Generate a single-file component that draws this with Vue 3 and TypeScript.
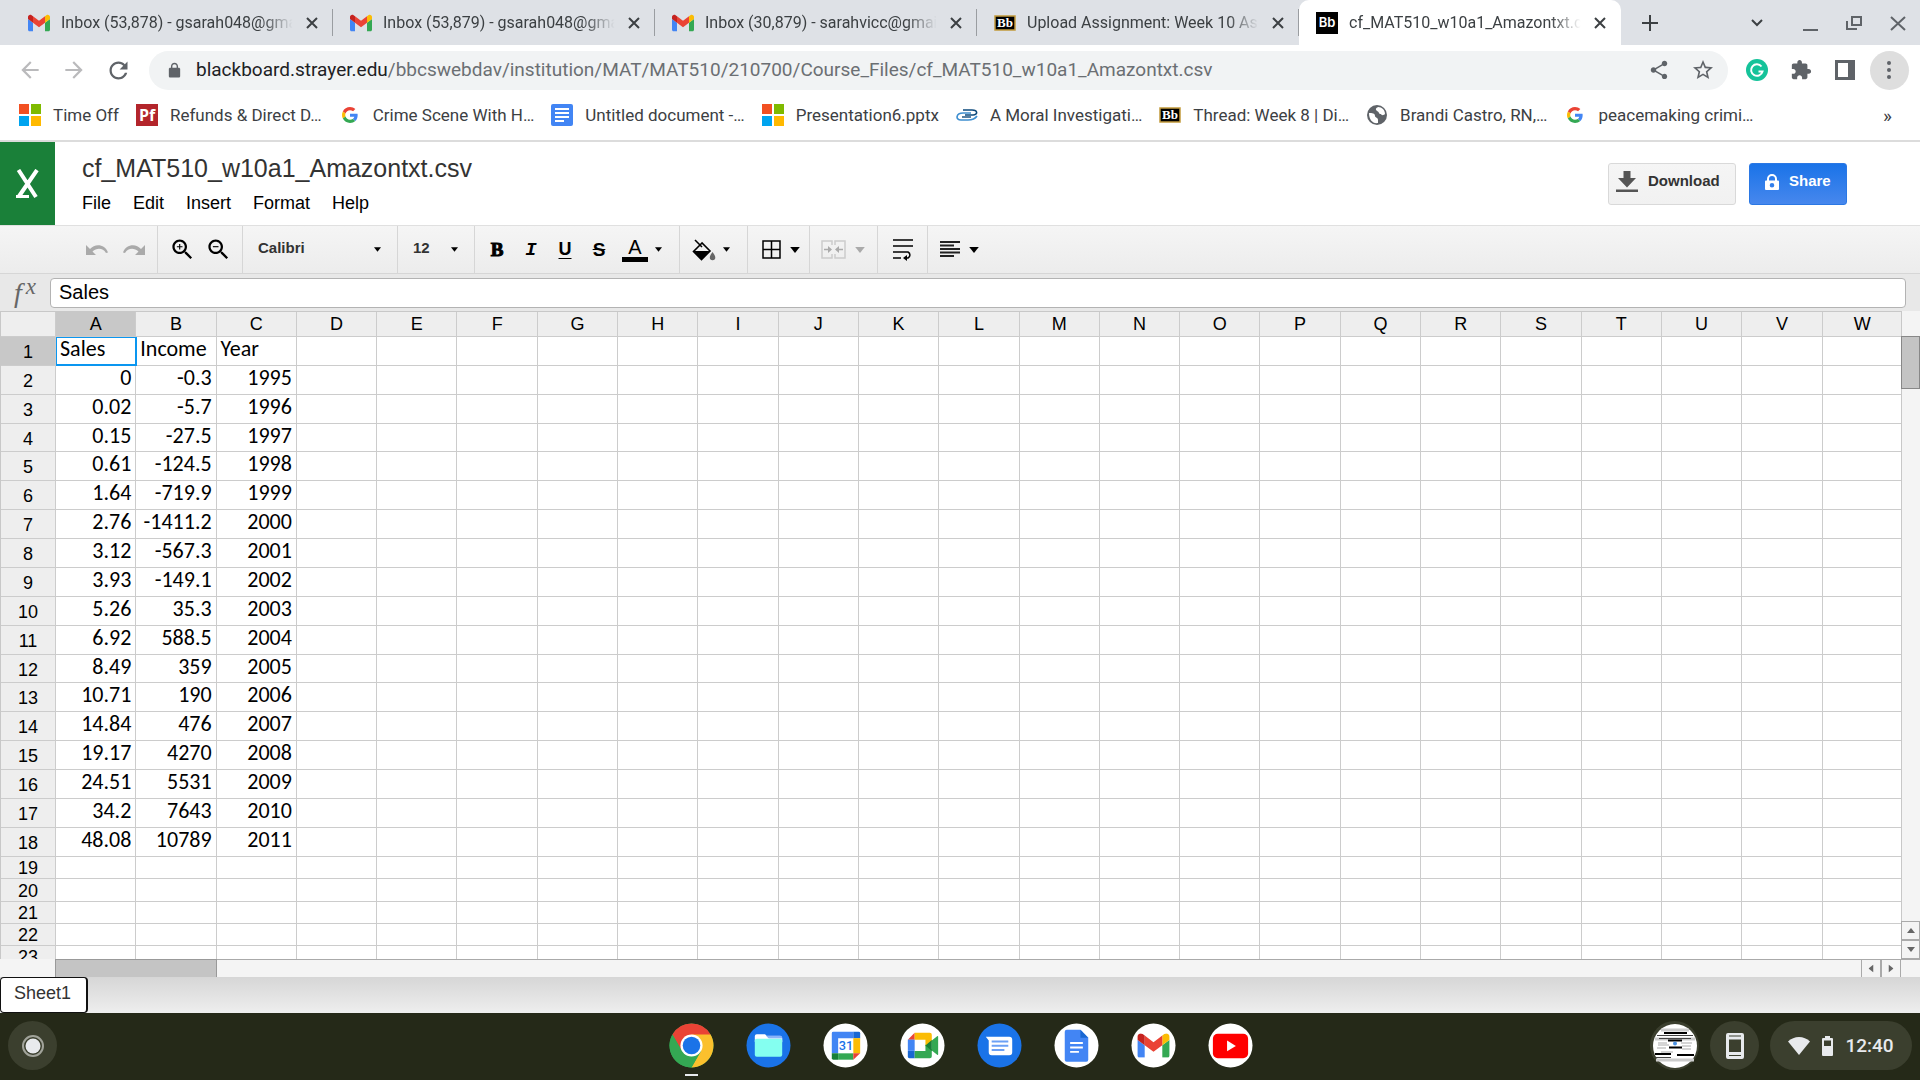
<script setup lang="ts">
import { ref } from 'vue'

interface Tab {
  icon: string
  title: string
  active?: boolean
}

interface Bookmark {
  icon: string
  label: string
}

const tabs: Tab[] = [
  { icon: 'gmail', title: 'Inbox (53,878) - gsarah048@gmail.com' },
  { icon: 'gmail', title: 'Inbox (53,879) - gsarah048@gmail.com' },
  { icon: 'gmail', title: 'Inbox (30,879) - sarahvicc@gmail.com' },
  { icon: 'bb-gold', title: 'Upload Assignment: Week 10 Assignment' },
  { icon: 'bb', title: 'cf_MAT510_w10a1_Amazontxt.csv', active: true },
]

const bookmarks: Bookmark[] = [
  { icon: 'microsoft', label: 'Time Off' },
  { icon: 'pf', label: 'Refunds & Direct D…' },
  { icon: 'google', label: 'Crime Scene With H…' },
  { icon: 'doc', label: 'Untitled document -…' },
  { icon: 'microsoft', label: 'Presentation6.pptx' },
  { icon: 'swirl', label: 'A Moral Investigati…' },
  { icon: 'bb-gold', label: 'Thread: Week 8 | Di…' },
  { icon: 'globe', label: 'Brandi Castro, RN,…' },
  { icon: 'google', label: 'peacemaking crimi…' },
]

const menus = ['File', 'Edit', 'Insert', 'Format', 'Help']
const columns = 'ABCDEFGHIJKLMNOPQRSTUVW'.split('')
const apps = ['chrome', 'files', 'calendar', 'meet', 'messages', 'docs', 'mail', 'youtube']

const data: string[][] = [
  ['Sales', 'Income', 'Year'],
  ['0', '-0.3', '1995'],
  ['0.02', '-5.7', '1996'],
  ['0.15', '-27.5', '1997'],
  ['0.61', '-124.5', '1998'],
  ['1.64', '-719.9', '1999'],
  ['2.76', '-1411.2', '2000'],
  ['3.12', '-567.3', '2001'],
  ['3.93', '-149.1', '2002'],
  ['5.26', '35.3', '2003'],
  ['6.92', '588.5', '2004'],
  ['8.49', '359', '2005'],
  ['10.71', '190', '2006'],
  ['14.84', '476', '2007'],
  ['19.17', '4270', '2008'],
  ['24.51', '5531', '2009'],
  ['34.2', '7643', '2010'],
  ['48.08', '10789', '2011'],
]

const rowCount = 23
const formula = ref('Sales')

function rowClass(n: number): string {
  if (n > data.length) return n === 20 ? 'empty tall' : 'empty'
  return n % 8 === 4 ? 'filled short' : 'filled'
}

function cell(row: number, col: number): string {
  return data[row - 1]?.[col] ?? ''
}
</script>

<template>
  <svg class="sprite" aria-hidden="true">
    <symbol id="gmail" viewBox="52 42 88 66">
      <path fill="#4285f4" d="M58 108h14V74L52 59v43c0 3.32 2.69 6 6 6" />
      <path fill="#34a853" d="M120 108h14c3.32 0 6-2.69 6-6V59l-20 15" />
      <path fill="#fbbc04" d="M120 48v26l20-15v-8c0-7.42-8.47-11.65-14.4-7.2" />
      <path fill="#ea4335" d="M72 74V48l24 18 24-18v26L96 92" />
      <path fill="#c5221f" d="M52 51v8l20 15V48l-5.6-4.2c-5.94-4.45-14.4-.22-14.4 7.2" />
    </symbol>
    <symbol id="bb-gold" viewBox="0 0 22 22">
      <rect x="1" y="4" width="20" height="14" fill="#000" stroke="#c29a3c" stroke-width="1.5" />
      <text x="11" y="15" text-anchor="middle" font-family="Liberation Serif, serif" font-weight="bold" font-size="13" fill="#fff">Bb</text>
    </symbol>
    <symbol id="bb" viewBox="0 0 22 22">
      <rect width="22" height="22" fill="#000" />
      <text x="11" y="15" text-anchor="middle" font-family="Inter, sans-serif" font-weight="600" font-size="13" fill="#fff">Bb</text>
    </symbol>
    <symbol id="microsoft" viewBox="0 0 22 22">
      <path fill="#f25022" d="M0 0h10v10H0z" />
      <path fill="#7fba00" d="M12 0h10v10H12z" />
      <path fill="#00a4ef" d="M0 12h10v10H0z" />
      <path fill="#ffb900" d="M12 12h10v10H12z" />
    </symbol>
    <symbol id="pf" viewBox="0 0 22 22">
      <rect width="22" height="22" fill="#b3252b" />
      <text x="11" y="17" text-anchor="middle" font-family="Open Sans, sans-serif" font-weight="bold" font-size="16" fill="#fff">Pf</text>
    </symbol>
    <symbol id="google" viewBox="-9 -9 66 66">
      <path fill="#ea4335" d="M24 9.5c3.54 0 6.71 1.22 9.21 3.6l6.85-6.85C35.9 2.38 30.47 0 24 0 14.62 0 6.51 5.38 2.56 13.22l7.98 6.19C12.43 13.72 17.74 9.5 24 9.5z" />
      <path fill="#4285f4" d="M46.98 24.55c0-1.57-.15-3.09-.38-4.55H24v9.02h12.94c-.58 2.96-2.26 5.48-4.78 7.18l7.73 6c4.51-4.18 7.09-10.36 7.09-17.65z" />
      <path fill="#fbbc05" d="M10.53 28.59c-.48-1.45-.76-2.99-.76-4.59s.27-3.14.76-4.59l-7.98-6.19C.92 16.46 0 20.12 0 24c0 3.88.92 7.54 2.56 10.78l7.97-6.19z" />
      <path fill="#34a853" d="M24 48c6.48 0 11.93-2.13 15.89-5.81l-7.73-6c-2.15 1.45-4.92 2.3-8.16 2.3-6.26 0-11.57-4.22-13.47-9.91l-7.98 6.19C6.51 42.62 14.62 48 24 48z" />
    </symbol>
    <symbol id="doc" viewBox="0 0 22 22">
      <rect width="22" height="22" rx="2" fill="#4285f4" />
      <path fill="#fff" d="M4 4h14v2H4zM4 8h14v2H4zM4 12h14v2H4zM4 16h9v2H4z" />
    </symbol>
    <symbol id="swirl" viewBox="0 0 22 22">
      <path d="M7 6h9c6 0 6 5 1 5H9" fill="none" stroke="#0d4a7c" stroke-width="1.600" />
      <path d="M15 9H7c-7 0-8 7-2 7h7c4 0 7-1 9-4" fill="none" stroke="#3e8fd0" stroke-width="1.600" />
      <path d="M6 13h9" stroke="#0d4a7c" stroke-width="1.400" />
    </symbol>
    <symbol id="globe" viewBox="0 0 22 22">
      <circle cx="11" cy="11" r="10" fill="#5f6368" />
      <path fill="#fff" d="M3 9c3 0 6 0 6 3 0 2 3 1 3 4v3c-5 1-9-3-9-10zM12 3c-2 1-3 2-1 4 3 1 1 3 4 3 1 2 3 1 4 0 0-4-3-7-7-7z" />
    </symbol>
    <symbol id="x" viewBox="0 0 16 16">
      <path d="M3 3l10 10M13 3L3 13" fill="none" stroke="currentColor" stroke-width="2" />
    </symbol>
    <symbol id="back" viewBox="0 0 24 24">
      <path d="M20 11H7.83l5.59-5.59L12 4l-8 8 8 8 1.41-1.41L7.83 13H20v-2z" fill="currentColor" />
    </symbol>
    <symbol id="lock" viewBox="0 0 24 24">
      <path d="M18 8h-1V6c0-2.76-2.24-5-5-5S7 3.24 7 6v2H6c-1.1 0-2 .9-2 2v10c0 1.1.9 2 2 2h12c1.1 0 2-.9 2-2V10c0-1.1-.9-2-2-2zM9 6c0-1.66 1.34-3 3-3s3 1.34 3 3v2H9z" fill="currentColor" />
    </symbol>
    <symbol id="caret" viewBox="0 0 8 5">
      <path d="M0 0h8L4 5z" fill="currentColor" />
    </symbol>
    <symbol id="lens" viewBox="0 0 24 24">
      <path d="M15.5 14h-.79l-.28-.27C15.41 12.59 16 11.11 16 9.5 16 5.91 13.09 3 9.5 3S3 5.91 3 9.5 5.91 16 9.5 16c1.61 0 3.09-.59 4.23-1.57l.27.28v.79l5 4.99L20.49 19l-4.99-5zm-6 0C7.01 14 5 11.99 5 9.5S7.01 5 9.5 5 14 7.01 14 9.5 11.99 14 9.5 14z" />
    </symbol>
    <symbol id="undo" viewBox="0 0 22 12">
      <path d="M0 1v10h10L6.500 7.500C11 3.500 17 4 20 9l2-.5C19 0 9-1 4 5z" fill="#aaa" />
    </symbol>

    <symbol id="chrome" viewBox="0 0 46 46">
      <circle cx="23" cy="23" r="22.500" fill="#34a853" />
      <path fill="#ea4335" d="M23 23L3.500 11.800A22.500 22.500 0 0 1 42.500 11.800z" />
      <path fill="#ea4335" d="M3.500 11.800L13.300 28.600 23 11.800z" />
      <path fill="#fbc02d" d="M23 11.800h19.500A22.500 22.500 0 0 1 23 45.500l9.700-16.900z" />
      <path fill="#34a853" d="M3.500 11.800L13.300 28.600 32.700 28.600 23 45.500A22.500 22.500 0 0 1 3.500 11.800z" />
      <circle cx="23" cy="23" r="11.300" fill="#fff" />
      <circle cx="23" cy="23" r="9" fill="#1a73e8" />
    </symbol>
    <symbol id="files" viewBox="0 0 46 46">
      <circle cx="23" cy="23" r="22.500" fill="#1a73e8" />
      <path fill="#8ab4f8" d="M21 13h14a2 2 0 0 1 2 2v5H21z" />
      <path fill="#fff" d="M11 11.500h8.500l4 4H37v4H9v-6a2 2 0 0 1 2-2z" />
      <path fill="#8ab4f8" d="M20.500 13H35a2 2 0 0 1 2 2v.5H23z" />
      <rect x="9" y="16" width="28" height="18.500" rx="2" fill="#84fff0" />
    </symbol>
    <symbol id="calendar" viewBox="0 0 46 46">
      <circle cx="23" cy="23" r="22.500" fill="#fff" />
      <path fill="#4285f4" d="M10.500 9H31v6.500H15.500V31H9V10.500A1.500 1.500 0 0 1 10.500 9z" />
      <path fill="#1967d2" d="M31 9h5.500A1.500 1.500 0 0 1 38 10.500v5h-7z" />
      <path fill="#fbbc04" d="M31 15.500h7V31h-7z" />
      <path fill="#34a853" d="M15.500 31H31v6.500H15.500z" />
      <path fill="#188038" d="M9 31h6.500v6.500h-5A1.500 1.500 0 0 1 9 36z" />
      <path fill="#ea4335" d="M31 31h7l-7 6.500z" />
      <text x="23.500" y="28" text-anchor="middle" font-family="Roboto, sans-serif" font-weight="500" font-size="13" fill="#1a73e8">31</text>
    </symbol>
    <symbol id="meet" viewBox="0 0 46 46">
      <circle cx="23" cy="23" r="22.500" fill="#fff" />
      <path fill="#ea4335" d="M8 17l7-7v7z" />
      <path fill="#4285f4" d="M8 17h7v11.500H8z" />
      <path fill="#1967d2" d="M8 28.500h7V36h-5.500A1.500 1.500 0 0 1 8 34.500z" />
      <path fill="#fbbc04" d="M15 10h15.500a2 2 0 0 1 2 2v7L26 24v-7H15z" />
      <path fill="#34a853" d="M15 28.500h11V22l6.500 5v7a2 2 0 0 1-2 2H15zM32.500 18l5.500-4.500c.600-.500 1-.3 1 .5v18c0 .8-.4 1-1 .5L32.500 28z" />
      <path fill="#188038" d="M26 23l6.500-5.500v11z" />
    </symbol>
    <symbol id="messages" viewBox="0 0 46 46">
      <circle cx="23" cy="23" r="22.500" fill="#1a73e8" />
      <path fill="#fff" d="M9 14h24a3 3 0 0 1 3 3v13a3 3 0 0 1-3 3H15a3 3 0 0 1-3-3V18z" />
      <path stroke="#6ba0f5" stroke-width="2" d="M15 19h17M15 23.300h17M15 27.500h13" />
    </symbol>
    <symbol id="docs" viewBox="0 0 46 46">
      <circle cx="23" cy="23" r="22.500" fill="#fff" />
      <path fill="#4285f4" d="M13 7h14l8 8v22.500a2 2 0 0 1-2 2H13a2 2 0 0 1-2-2V9a2 2 0 0 1 2-2z" />
      <path fill="#1967d2" d="M27 7l8 8h-8z" />
      <path stroke="#fff" stroke-width="2" d="M16.500 20.500h13M16.500 25h13M16.500 29.500h9" />
    </symbol>
    <symbol id="mail" viewBox="0 0 46 46">
      <circle cx="23" cy="23" r="22.500" fill="#fff" />
      <use href="#gmail" x="6.500" y="10.500" width="33" height="25" />
    </symbol>
    <symbol id="youtube" viewBox="0 0 46 46">
      <circle cx="23" cy="23" r="22.500" fill="#fff" />
      <rect x="5" y="11" width="36" height="25" rx="5" fill="#f00" />
      <path fill="#fff" d="M19.500 18l9 5.500-9 5.500z" />
    </symbol>
  </svg>

  <div class="screen">
    <header class="tabstrip">
      <nav class="tabs">
        <div v-for="(tab, i) in tabs" :key="i" class="tab" :class="{ active: tab.active }">
          <svg class="icon22"><use :href="'#' + tab.icon" /></svg>
          <span class="tab-title">{{ tab.title }}</span>
          <button class="plain" aria-label="Close tab">
            <svg width="16" height="16"><use href="#x" /></svg>
          </button>
        </div>
      </nav>
      <button class="plain new-tab" aria-label="New tab">
        <svg width="18" height="18" viewBox="0 0 18 18"><path d="M9 1v16M1 9h16" stroke="#3c4043" stroke-width="2" /></svg>
      </button>
      <div class="window-controls">
        <button class="plain" aria-label="Search tabs">
          <svg width="18" height="18" viewBox="0 0 18 18"><path d="M4 6l5 5 5-5" fill="none" stroke="#3c4043" stroke-width="2" /></svg>
        </button>
        <button class="plain" aria-label="Minimize">
          <svg width="18" height="18" viewBox="0 0 18 18"><path d="M2 16h15" stroke="#5f6368" stroke-width="2" /></svg>
        </button>
        <button class="plain" aria-label="Restore">
          <svg width="18" height="18" viewBox="0 0 18 18"><path d="M7 3h9v8H7zM2 7v8h10" fill="none" stroke="#5f6368" stroke-width="2" /></svg>
        </button>
        <button class="plain" aria-label="Close window">
          <svg width="18" height="18" viewBox="0 0 18 18"><path d="M2 3l14 13M16 3L2 16" stroke="#5f6368" stroke-width="2" /></svg>
        </button>
      </div>
    </header>

    <div class="navbar">
      <button class="nav-btn dim" aria-label="Back"><svg width="26" height="26"><use href="#back" /></svg></button>
      <button class="nav-btn dim" aria-label="Forward"><svg class="flip" width="26" height="26"><use href="#back" /></svg></button>
      <button class="nav-btn" aria-label="Reload">
        <svg width="27" height="27" viewBox="0 0 24 24"><path fill="currentColor" d="M17.650 6.350C16.200 4.900 14.210 4 12 4c-4.420 0-7.990 3.580-7.990 8s3.570 8 7.990 8c3.730 0 6.840-2.550 7.730-6h-2.080c-.82 2.330-3.040 4-5.650 4-3.310 0-6-2.690-6-6s2.690-6 6-6c1.660 0 3.140.69 4.220 1.780L13 11h7V4l-2.350 2.350z" /></svg>
      </button>
      <div class="omnibox">
        <svg class="lock" width="17" height="17"><use href="#lock" /></svg>
        <div class="url"><span class="host">blackboard.strayer.edu</span>/bbcswebdav/institution/MAT/MAT510/210700/Course_Files/cf_MAT510_w10a1_Amazontxt.csv</div>
        <button class="nav-btn" aria-label="Share this page">
          <svg width="22" height="22" viewBox="0 0 24 24"><path fill="currentColor" d="M18 16.080c-.76 0-1.440.3-1.960.77L8.910 12.700c.05-.23.09-.46.09-.7s-.04-.47-.09-.7l7.050-4.110c.54.5 1.250.81 2.040.81 1.660 0 3-1.340 3-3s-1.340-3-3-3-3 1.340-3 3c0 .24.04.47.09.7L8.040 9.810C7.500 9.310 6.790 9 6 9c-1.660 0-3 1.340-3 3s1.340 3 3 3c.79 0 1.500-.31 2.040-.81l7.120 4.160c-.05.21-.08.43-.08.65 0 1.610 1.310 2.920 2.920 2.920 1.610 0 2.920-1.310 2.920-2.920s-1.310-2.920-2.920-2.920z" /></svg>
        </button>
        <button class="nav-btn" aria-label="Bookmark this page">
          <svg width="24" height="24" viewBox="0 0 24 24"><path fill="currentColor" d="M22 9.240l-7.190-.62L12 2 9.190 8.630 2 9.240l5.460 4.730L5.820 21 12 17.270 18.180 21l-1.630-7.030L22 9.240zM12 15.400l-3.760 2.270 1-4.280-3.320-2.880 4.380-.38L12 6.100l1.710 4.040 4.380.38-3.320 2.880 1 4.280L12 15.400z" /></svg>
        </button>
      </div>
      <button class="nav-btn" aria-label="Grammarly">
        <svg width="22" height="22" viewBox="0 0 22 22"><circle cx="11" cy="11" r="11" fill="#15c39a" /><path d="M15.500 7.500a5.800 5.800 0 1 0 1 5h-4" fill="none" stroke="#fff" stroke-width="2" /></svg>
      </button>
      <button class="nav-btn" aria-label="Extensions">
        <svg width="22" height="22" viewBox="0 0 24 24"><path fill="currentColor" d="M20.500 11H19V7c0-1.100-.9-2-2-2h-4V3.500C13 2.120 11.880 1 10.500 1S8 2.120 8 3.500V5H4c-1.100 0-1.990.9-1.990 2v3.800H3.500c1.490 0 2.700 1.210 2.700 2.700s-1.210 2.700-2.700 2.700H2V20c0 1.100.9 2 2 2h3.800v-1.500c0-1.490 1.210-2.700 2.700-2.700 1.490 0 2.700 1.210 2.700 2.700V22H17c1.100 0 2-.9 2-2v-4h1.500c1.380 0 2.500-1.120 2.500-2.500S21.880 11 20.500 11z" /></svg>
      </button>
      <button class="nav-btn" aria-label="Side panel">
        <svg width="20" height="20" viewBox="0 0 20 20"><path fill="currentColor" fill-rule="evenodd" d="M0 0h20v20H0zM3 3v14h10V3z" /></svg>
      </button>
      <button class="nav-btn" aria-label="Browser menu">
        <span class="menu-disc">
          <svg width="6" height="20" viewBox="0 0 6 20"><circle cx="3" cy="3" r="2" fill="currentColor" /><circle cx="3" cy="10" r="2" fill="currentColor" /><circle cx="3" cy="17" r="2" fill="currentColor" /></svg>
        </span>
      </button>
    </div>

    <nav class="bookmarks">
      <a v-for="(mark, i) in bookmarks" :key="i" href="#">
        <svg class="icon22"><use :href="'#' + mark.icon" /></svg>
        <span>{{ mark.label }}</span>
      </a>
      <button class="plain more" aria-label="More bookmarks">»</button>
    </nav>

    <section class="docbar">
      <div class="logo">
        <svg width="26" height="30" viewBox="0 0 26 30"><path d="M3.500 1L21 28M22 1L3.500 28" fill="none" stroke="#fff" stroke-width="4" /><path d="M1 26h13v3H1z" fill="#fff" /></svg>
      </div>
      <div class="doc-info">
        <h1>cf_MAT510_w10a1_Amazontxt.csv</h1>
        <nav class="menus">
          <button v-for="menu in menus" :key="menu" class="plain">{{ menu }}</button>
        </nav>
      </div>
      <button class="action download">
        <svg width="22" height="22" viewBox="0 0 22 22"><path fill="#555" d="M7.500 0h7v7H20l-9 9.500L2 7h5.500zM0 18.500h22V21H0z" /></svg>
        Download
      </button>
      <button class="action share">
        <svg width="14" height="17" viewBox="0 0 14 17"><path d="M3 8V5a4 4 0 0 1 8 0v3" fill="none" stroke="#fff" stroke-width="2" /><path fill="#fff" fill-rule="evenodd" d="M1 6.500h12a1 1 0 0 1 1 1V15a1 1 0 0 1-1 1H1a1 1 0 0 1-1-1V7.500a1 1 0 0 1 1-1zM7 9a2.300 2.300 0 1 0 0 4.600A2.300 2.300 0 0 0 7 9z" /></svg>
        Share
      </button>
    </section>

    <section class="toolbar" aria-label="Formatting">
      <div class="group history">
        <button class="plain" aria-label="Undo"><svg width="22" height="12"><use href="#undo" /></svg></button>
        <button class="plain" aria-label="Redo"><svg class="flip" width="22" height="12"><use href="#undo" /></svg></button>
      </div>
      <div class="group zoom">
        <button class="plain" aria-label="Zoom in">
          <svg width="27" height="27" viewBox="0 0 24 24"><use href="#lens" /><path d="M12 10h-2v2H9v-2H7V9h2V7h1v2h2z" /></svg>
        </button>
        <button class="plain" aria-label="Zoom out">
          <svg width="27" height="27" viewBox="0 0 24 24"><use href="#lens" /><path d="M7 9h5v1H7z" /></svg>
        </button>
      </div>
      <div class="group font-name">
        <select aria-label="Font"><option>Calibri</option></select>
        <svg class="caret small"><use href="#caret" /></svg>
      </div>
      <div class="group font-size">
        <select aria-label="Font size"><option>12</option></select>
        <svg class="caret small"><use href="#caret" /></svg>
      </div>
      <div class="group style">
        <button class="plain letter bold">B</button>
        <button class="plain letter italic">I</button>
        <button class="plain letter underline">U</button>
        <button class="plain letter strike">S</button>
        <button class="plain with-caret" aria-label="Text color">
          <span class="color-a">A</span>
          <svg class="caret small"><use href="#caret" /></svg>
        </button>
      </div>
      <div class="group fill">
        <button class="plain with-caret" aria-label="Fill color">
          <svg width="24" height="22" viewBox="0 0 24 22">
            <path d="M3 1l7 7M10 4L1.500 12.500 9.500 20.500 18 12z" fill="none" stroke="#000" stroke-width="1.600" />
            <path d="M1.500 12h16L9.500 20.500z" />
            <path fill="#666" d="M20.500 13c2 3 2.800 4 2.800 5.500a2.700 2.700 0 0 1-5.500 0c0-1.500.7-2.500 2.700-5.500z" />
          </svg>
          <svg class="caret small"><use href="#caret" /></svg>
        </button>
      </div>
      <div class="group borders">
        <button class="plain with-caret" aria-label="Borders">
          <svg width="19" height="19" viewBox="0 0 19 19"><path d="M1 1h17v17H1zM9.500 1v17M1 9.500h17" fill="none" stroke="#000" stroke-width="1.500" /></svg>
          <svg class="caret"><use href="#caret" /></svg>
        </button>
      </div>
      <div class="group merge">
        <button class="plain with-caret dim" aria-label="Merge cells">
          <svg width="25" height="19" viewBox="0 0 25 19">
            <path d="M11 5V1H1v17h10v-4M14 5V1h10v17H14v-4" fill="none" stroke="#ccc" stroke-width="1.500" />
            <path d="M3 9.500h5M22 9.500h-5" stroke="#aaa" stroke-width="1.500" />
            <path fill="#aaa" d="M7 6l4 3.500L7 13zM18 6l-4 3.500 4 3.500z" />
          </svg>
          <svg class="caret"><use href="#caret" /></svg>
        </button>
      </div>
      <div class="group wrap">
        <button class="plain" aria-label="Wrap text">
          <svg width="20" height="22" viewBox="0 0 20 22">
            <path d="M0 1h20M0 7h20M0 13h15a4 3.500 0 0 1 0 6h-3M0 19h8" fill="none" stroke="#000" stroke-width="1.500" />
            <path d="M14 16v6l-4-3z" />
          </svg>
        </button>
      </div>
      <div class="group align">
        <button class="plain with-caret" aria-label="Align">
          <svg width="20" height="17" viewBox="0 0 20 17"><path d="M0 1h20M0 4.500h14M0 8h20M0 11.500h20M0 15h14" stroke="#222" stroke-width="1.800" /></svg>
          <svg class="caret"><use href="#caret" /></svg>
        </button>
      </div>
    </section>

    <section class="formula">
      <label for="formula-input"><i>f</i><i class="sup">x</i></label>
      <input id="formula-input" v-model="formula" type="text" />
    </section>

    <main class="sheet">
      <div class="grid">
        <table>
          <thead>
            <tr>
              <th class="corner" aria-label="Select all"></th>
              <th v-for="(col, c) in columns" :key="col" scope="col" :class="{ current: c === 0 }">{{ col }}</th>
            </tr>
          </thead>
          <tbody>
            <tr v-for="n in rowCount" :key="n" :class="rowClass(n)">
              <th scope="row" :class="{ current: n === 1 }">{{ n }}</th>
              <td v-for="(col, c) in columns" :key="col" :class="{ label: n === 1, selected: n === 1 && c === 0 }">{{ cell(n, c) }}</td>
            </tr>
          </tbody>
        </table>
      </div>
      <div class="vbar">
        <div class="vthumb"></div>
        <button aria-label="Scroll up"><svg class="caret up"><use href="#caret" /></svg></button>
        <button aria-label="Scroll down"><svg class="caret"><use href="#caret" /></svg></button>
      </div>
    </main>
    <div class="hbar">
      <div class="hthumb"></div>
      <button aria-label="Scroll left"><svg class="caret left"><use href="#caret" /></svg></button>
      <button aria-label="Scroll right"><svg class="caret right"><use href="#caret" /></svg></button>
    </div>
    <nav class="sheets">
      <button>Sheet1</button>
    </nav>

    <footer class="shelf">
      <div class="side">
        <button class="disc" aria-label="Launcher">
          <svg width="24" height="24" viewBox="0 0 24 24"><circle cx="12" cy="12" r="10" fill="none" stroke="#a1a39a" stroke-width="2" /><circle cx="12" cy="12" r="7.500" fill="#e8eaed" /></svg>
        </button>
      </div>
      <nav class="apps">
        <button v-for="app in apps" :key="app" class="app" :class="{ running: app === 'chrome' }" :aria-label="app">
          <svg width="45" height="45"><use :href="'#' + app" /></svg>
        </button>
      </nav>
      <div class="side right">
        <button class="disc" aria-label="Recent files">
          <svg width="44" height="44" viewBox="0 0 44 44">
            <circle cx="22" cy="22" r="22" fill="#fff" />
            <path d="M8 6h28M2 15h40M3 36h38" stroke="#ccc" stroke-width="3" />
            <path d="M11 9h23M15 16.500h14M16 23.500h13M2 30h16M24 31h17" stroke="#000" stroke-width="2" />
            <path d="M4 11.500h36M6 14.500h32M3 33.500h15" stroke="#444" />
            <path d="M5 19h9M5 21h11M4 24h9M28 19h11M29 22h9M29 25h9M8 28h12" stroke="#aaa" />
            <circle cx="22" cy="19.500" r="2" fill="#4a90e2" />
          </svg>
        </button>
        <button class="disc" aria-label="Phone hub">
          <svg width="18" height="26" viewBox="0 0 18 26"><path fill="#e8eaed" fill-rule="evenodd" d="M2 0h14a2 2 0 0 1 2 2v22a2 2 0 0 1-2 2H2a2 2 0 0 1-2-2V2a2 2 0 0 1 2-2zM3 2.500v1h12v-1zM3 6.500v12.500h12V6.500zM3 22v1h12v-1z" /></svg>
        </button>
        <button class="status">
          <svg width="22" height="18" viewBox="0 0 22 18"><path fill="#e8eaed" d="M11 18L0 4.500c6-6 16-6 22 0z" /></svg>
          <svg width="11" height="20" viewBox="0 0 11 20"><path fill="#e8eaed" fill-rule="evenodd" d="M3 0h5v2h2a1 1 0 0 1 1 1v16a1 1 0 0 1-1 1H1a1 1 0 0 1-1-1V3a1 1 0 0 1 1-1h2zM2 4.500V10h7V4.500z" /></svg>
          12:40
        </button>
      </div>
    </footer>
  </div>
</template>

<style>
body {
  margin: 0;
}
</style>

<style scoped>
.screen {
  display: flex;
  flex-direction: column;
  height: 100vh;
  overflow: hidden;
  background: #fff;
  color: #000;
  font-family: 'Liberation Sans', Arial, sans-serif;
}

.screen > * {
  flex: none;
}

svg {
  display: block;
  flex: none;
}

.sprite {
  display: none;
}

button {
  font-family: inherit;
}

.plain {
  display: flex;
  align-items: center;
  padding: 0;
  border: 0;
  background: none;
  color: inherit;
}

.icon22 {
  width: 22px;
  height: 22px;
}

.flip {
  transform: scaleX(-1);
}

/* Browser frame */
.tabstrip {
  display: flex;
  height: 45px;
  background: #dee1e6;
  color: #3c4043;
  font-family: Roboto, sans-serif;
  font-size: 16px;
}

.tabs {
  display: flex;
  margin-left: 11px;
}

.tab {
  display: flex;
  align-items: center;
  box-sizing: border-box;
  width: 322px;
  padding: 0 13px 0 17px;
  position: relative;
}

.tab:not(.active)::after {
  content: '';
  position: absolute;
  right: 0;
  top: 9px;
  width: 1px;
  height: 27px;
  background: #9a9da1;
}

.tab.active {
  background: #fff;
  border-radius: 10px 10px 0 0;
}

.tab-title {
  flex: 1;
  min-width: 0;
  margin: 0 9px 0 11px;
  line-height: 22px;
  overflow: hidden;
  white-space: nowrap;
  -webkit-mask-image: linear-gradient(to right, #000 86%, transparent 99%);
  mask-image: linear-gradient(to right, #000 86%, transparent 99%);
}

.new-tab {
  margin-left: 20px;
}

.window-controls {
  display: flex;
  gap: 26px;
  margin-left: auto;
  padding-right: 13px;
}

.window-controls .plain:first-child {
  margin-right: 9px;
}

.navbar {
  display: flex;
  align-items: center;
  height: 50px;
  padding: 0 9px 0 8px;
  color: #5f6368;
}

.nav-btn {
  display: flex;
  align-items: center;
  justify-content: center;
  width: 44px;
  height: 39px;
  padding: 0;
  border: 0;
  background: none;
  color: #5f6368;
}

.nav-btn.dim {
  color: #bababc;
}

.omnibox {
  display: flex;
  flex: 1;
  align-items: center;
  height: 39px;
  margin: 0 7px 0 9px;
  padding: 0 3px 0 17px;
  border-radius: 20px;
  background: #f1f3f4;
}

.url {
  flex: 1;
  min-width: 0;
  margin-left: 13px;
  overflow: hidden;
  white-space: nowrap;
  font-family: Roboto, sans-serif;
  font-size: 19px;
  line-height: 28px;
  color: #6b6f73;
}

.host {
  color: #202124;
}

.menu-disc {
  display: flex;
  align-items: center;
  justify-content: center;
  width: 39px;
  height: 39px;
  border-radius: 50%;
  background: #dedede;
}

.bookmarks {
  display: flex;
  align-items: center;
  box-sizing: border-box;
  gap: 17px;
  height: 47px;
  padding: 0 28px 5px 19px;
  border-bottom: 2px solid #dcdcdc;
  font-family: Roboto, sans-serif;
  font-size: 17px;
  line-height: 22px;
  color: #3c4043;
}

.bookmarks a {
  display: flex;
  align-items: center;
  gap: 12px;
  color: inherit;
  text-decoration: none;
  white-space: nowrap;
}

.more {
  margin-left: auto;
  font-family: Roboto, sans-serif;
  font-size: 19px;
}

/* Document header */
.docbar {
  display: flex;
  height: 83px;
  padding-right: 73px;
}

.logo {
  display: flex;
  align-items: center;
  justify-content: center;
  width: 55px;
  background: #1a8039;
}

.doc-info {
  flex: 1;
  padding: 11px 0 0 27px;
}

h1 {
  margin: 0;
  font-size: 25px;
  font-weight: 400;
  line-height: 30px;
  color: #333;
}

.menus {
  display: flex;
  gap: 22px;
  margin-top: 10px;
}

.menus .plain {
  font-size: 18px;
  line-height: 20px;
}

.action {
  display: flex;
  box-sizing: border-box;
  height: 42px;
  margin-top: 21px;
  border: 1px solid #d9d9d9;
  border-radius: 3px;
  font-size: 15px;
  font-weight: bold;
  line-height: 20px;
}

.download {
  gap: 10px;
  width: 128px;
  padding: 7px 0 0 7px;
  background: linear-gradient(#f5f5f5, #f1f1f1);
  color: #333;
}

.share {
  gap: 10px;
  width: 98px;
  margin-left: 13px;
  padding: 7px 0 0 15px;
  border-color: #2b78e4;
  background: linear-gradient(#1a73e8, #4787ed);
  color: #fff;
}

.share svg {
  margin-top: 3px;
}

/* Formatting toolbar */
.toolbar {
  display: flex;
  height: 47px;
  border-top: 1px solid #e0e0e0;
  border-bottom: 1px solid #d6d6d6;
  background: linear-gradient(#f5f5f5, #ececec);
}

.group {
  display: flex;
  align-items: center;
  box-sizing: border-box;
  border-right: 1px solid #d6d6d6;
  position: relative;
}

.history {
  gap: 15px;
  width: 158px;
  padding-left: 86px;
}

.zoom {
  gap: 9px;
  width: 85px;
  padding-left: 11px;
}

.group select {
  width: 100%;
  height: 40px;
  padding: 0 0 4px 15px;
  border: 0;
  background: none;
  appearance: none;
  color: #333;
  font-family: inherit;
  font-size: 15px;
  font-weight: bold;
}

.group select + .caret {
  position: absolute;
  right: 16px;
  top: 21px;
  pointer-events: none;
}

.font-name {
  width: 155px;
}

.font-size {
  width: 77px;
}

.style {
  width: 205px;
  padding-left: 5px;
}

.letter {
  justify-content: center;
  width: 34px;
  font-size: 19px;
  font-weight: bold;
}

.bold {
  font-family: 'Liberation Serif', serif;
  -webkit-text-stroke: 1px #000;
}

.italic {
  font-family: 'Liberation Mono', monospace;
  font-style: italic;
}

.underline {
  font-size: 18px;
  text-decoration: underline;
  text-underline-offset: 3px;
}

.strike {
  font-size: 19px;
  text-decoration: line-through;
}

.with-caret {
  gap: 9px;
}

.with-caret.dim {
  color: #aaa;
}

.style .with-caret {
  gap: 7px;
  margin-left: 6px;
}

.fill .with-caret {
  gap: 7px;
}

.color-a {
  width: 26px;
  border-bottom: 5px solid #000;
  font-size: 20px;
  line-height: 20px;
  text-align: center;
}

.caret {
  width: 10px;
  height: 6px;
}

.caret.small {
  width: 7px;
  height: 5px;
}

.fill {
  width: 68px;
  padding-left: 12px;
}

.borders {
  width: 62px;
  padding-left: 14px;
}

.merge {
  width: 68px;
  padding-left: 11px;
}

.wrap {
  width: 50px;
  padding-left: 15px;
}

.align {
  padding-left: 12px;
  border-right: 0;
}

/* Formula bar */
.formula {
  display: flex;
  align-items: center;
  height: 37px;
  padding-right: 14px;
  background: #e8e8e8;
}

.formula label {
  display: flex;
  width: 50px;
  box-sizing: border-box;
  padding-left: 14px;
  color: #666;
  font-family: 'Liberation Serif', serif;
  font-size: 28px;
  line-height: 30px;
}

.formula .sup {
  margin-left: 4px;
  font-size: 23px;
  line-height: 18px;
}

.formula input {
  flex: 1;
  box-sizing: border-box;
  min-width: 0;
  height: 30px;
  padding: 0 8px;
  border: 1px solid #b3b3b3;
  border-radius: 4px;
  background: #fff;
  color: #000;
  font-family: inherit;
  font-size: 20px;
}

/* Grid */
.screen > .sheet {
  display: flex;
  flex: 1 1 0;
  min-height: 0;
}

.grid {
  flex: 1;
  min-width: 0;
  overflow: hidden;
}

/* The last column runs a little way under the scrollbar */
table {
  width: calc(100% + 2px);
  table-layout: fixed;
  border-collapse: separate;
  border-spacing: 0;
  border-top: 1px solid #c8c8c8;
  border-left: 1px solid #c8c8c8;
}

th,
td {
  box-sizing: border-box;
  padding: 0;
  border-right: 1px solid #ccc;
  border-bottom: 1px solid #ccc;
}

th {
  background: #eee;
  font-size: 18px;
  font-weight: 400;
  line-height: 20px;
  text-align: center;
  vertical-align: middle;
}

thead th {
  height: 25px;
}

.corner {
  width: 55px;
}

th.current {
  background: #c8c8c8;
}

.filled > * {
  height: 29px;
}

.short > * {
  height: 28px;
}

.empty > * {
  height: 22px;
}

.tall > * {
  height: 23px;
}

.filled th {
  padding-top: 2px;
}

.empty th {
  padding-top: 1px;
}

td {
  padding: 0 4px;
  font-family: Carlito, Calibri, Lato, sans-serif;
  font-size: 22px;
  line-height: 24px;
  text-align: right;
  vertical-align: top;
  white-space: nowrap;
}

.empty td {
  line-height: 20px;
}

td.label {
  text-align: left;
}

.selected {
  position: relative;
}

.selected::after {
  content: '';
  position: absolute;
  inset: 0 -2px -1px 0;
  border: solid #0a96f0;
  border-width: 1px 2px 2px 1px;
}

.vbar {
  display: flex;
  flex-direction: column;
  box-sizing: border-box;
  width: 19px;
  padding-top: 25px;
  background: #f4f4f4;
  box-shadow: inset 1px 0 #c8c8c8;
}

.vthumb {
  box-sizing: border-box;
  height: 53px;
  margin-bottom: auto;
  border: 1px solid #888;
  background: #c4c4c4;
}

.vbar button,
.hbar button {
  display: flex;
  align-items: center;
  justify-content: center;
  box-sizing: border-box;
  width: 19px;
  height: 19px;
  padding: 0;
  border: 1px solid #aaa;
  background: #f4f4f4;
  color: #666;
}

.vbar .caret,
.hbar .caret {
  width: 8px;
  height: 5px;
}

.caret.up {
  transform: rotate(180deg);
}

.caret.left {
  transform: rotate(90deg);
}

.caret.right {
  transform: rotate(-90deg);
}

.hbar {
  display: flex;
  height: 18px;
  padding: 0 19px 0 55px;
  background: linear-gradient(#aaa, #aaa) 55px 0 / 100% 1px no-repeat #f4f4f4;
}

.hthumb {
  box-sizing: border-box;
  width: 162px;
  margin-right: auto;
  border: 1px solid #999;
  border-bottom: 0;
  background: #c4c4c4;
}

.hbar button {
  width: 20px;
  height: 18px;
  border-bottom: 0;
}

.sheets {
  display: flex;
  height: 36px;
  background: linear-gradient(#d6d6d6, #eee);
}

.sheets button {
  padding: 0 15px 4px 13px;
  border: 1px solid #111;
  border-right-width: 2px;
  border-radius: 4px;
  background: #fff;
  color: #333;
  font-size: 18px;
}

/* Shelf */
.shelf {
  display: flex;
  align-items: center;
  box-sizing: border-box;
  height: 67px;
  padding: 0 8px 2px;
  background: #252918;
}

.side {
  display: flex;
  flex: 1;
  gap: 11px;
}

.side.right {
  justify-content: flex-end;
}

.disc,
.status {
  display: flex;
  align-items: center;
  justify-content: center;
  width: 49px;
  height: 49px;
  padding: 0;
  border: 0;
  border-radius: 25px;
  background: #3b3f2e;
}

.status {
  gap: 12px;
  width: 142px;
  color: #e8eaed;
  font-family: Roboto, sans-serif;
  font-size: 19px;
  font-weight: 500;
}

.apps {
  display: flex;
  gap: 32px;
  padding: 0 0 1px 2px;
}

.app {
  padding: 0;
  border: 0;
  background: none;
  position: relative;
}

.app.running::after {
  content: '';
  position: absolute;
  left: 16px;
  bottom: -8px;
  width: 13px;
  height: 2px;
  background: #e8eaed;
}
</style>
